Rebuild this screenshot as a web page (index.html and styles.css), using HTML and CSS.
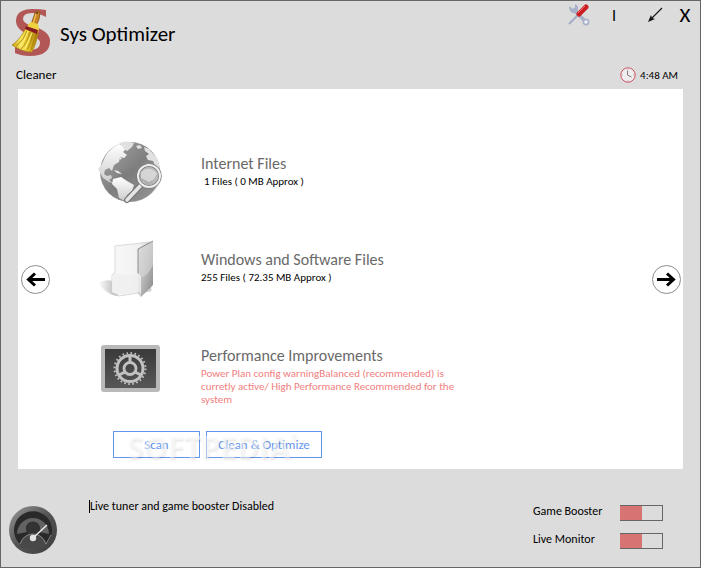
FILE: index.html
```html
<!DOCTYPE html>
<html lang="en">
<head>
<meta charset="utf-8">
<title>Sys Optimizer</title>
<link rel="stylesheet" href="styles.css">
</head>
<body>
<div class="window">
  <header class="titlebar">
    <svg class="logo" viewBox="0 0 38 48" aria-hidden="true">
      <defs>
        <linearGradient id="straw" x1="0" x2="1"><stop offset="0" stop-color="#c99f12"/><stop offset=".35" stop-color="#f8e75a"/><stop offset=".6" stop-color="#e7c92c"/><stop offset="1" stop-color="#a97908"/></linearGradient>
      </defs>
      <path d="M34 2V9Q27 5 20 5Q11 5 11 11Q11 15 20 18Q38 23 38 33Q38 48 18 48Q9 48 3 45V37Q10 42 18 42Q28 42 28 35Q28 30 18 27Q4 22 4 13Q4 1 21 1Q28 1 34 2z" fill="#b35656"/>
      <path d="M23 5q3-4 5 0q0 6-4 13l-5-1q2-7 4-12z" fill="#c78425" stroke="#88520f" stroke-width=".8"/>
      <path d="M24 6l-3 10" stroke="#f0bd55" stroke-width="1.4"/>
      <circle cx="25" cy="5" r="1" fill="#5d3b16"/>
      <path d="M16 17l3-3 7 2 1 5-1 4-12-4z" fill="#eed240"/>
      <path d="M14 20l12 5c-1 7-3 13-6 19-7 0-14-3-20-7 7-5 10-10 14-17z" fill="url(#straw)" stroke="#ac8415" stroke-width=".7"/>
      <path d="M15 23Q11 33 4 38M18 24Q15 35 9 41M21 25Q19 36 15 42M24 26L19 42" fill="none" stroke="#a57e13" stroke-width=".8"/>
      <path d="M16 23Q13 33 7 39M20 25L13 41" fill="none" stroke="#fff890" stroke-width=".9"/>
      <path d="M14 18l12 4-1 4-12-5z" fill="#861b24"/>
    </svg>
    <h1 class="title">Sys Optimizer</h1>
    <nav class="controls" aria-label="Window">
      <button class="control tools" aria-label="Settings">
        <svg viewBox="0 0 22 22">
          <path d="M5 5l12 12" stroke="#a8b1c8" stroke-width="3.6"/>
          <path d="M1 2l4 3 2-1V0q4 2 3 6-1 4-5 3Q1 8 1 2z" fill="#a8b1c8"/>
          <circle cx="18" cy="18" r="2.6" fill="#edf2fa" stroke="#a8b1c8" stroke-width="1.6"/>
          <path d="M1 20L11 10" stroke="#a2abc4" stroke-width="1.8"/>
          <path d="M11 10l7-7" stroke="#ca1e22" stroke-width="5" stroke-linecap="round"/>
          <path d="M10 9l7-7" stroke="#ef6c6a" stroke-width="1"/>
        </svg>
      </button>
      <button class="control bar" aria-label="Information">I</button>
      <button class="control minimize" aria-label="Minimize">
        <svg viewBox="0 0 16 16"><path d="M15 1L5 11" stroke="#111" stroke-width="1.1"/><path d="M1 15l3-7 1 3 3 1z" fill="#111"/></svg>
      </button>
      <button class="control close" aria-label="Close">X</button>
    </nav>
  </header>

  <div class="subbar">
    <h2 class="section">Cleaner</h2>
    <div class="clock">
      <svg viewBox="0 0 16 16" aria-hidden="true"><circle cx="8" cy="8" r="7.2" fill="#eee" stroke="#cc5061"/><path d="M7.5 3.5V8l4 2" fill="none" stroke="#8c7779"/><path d="M8 2v1M8 13v1M2 8h1M13 8h1" stroke="#c9abae"/></svg>
      <time>4:48 AM</time>
    </div>
  </div>

  <main class="panel">
    <button class="arrow" aria-label="Previous">
      <svg viewBox="0 0 29 29"><circle cx="14.5" cy="14.5" r="14" fill="#fff" stroke="#8c8c8c"/><path d="M24 14.500H7M14 8.500L7.500 14.500l6.500 6" fill="none" stroke="#000" stroke-width="3"/></svg>
    </button>
    <div class="content">
      <section class="item">
        <svg class="icon" viewBox="0 0 64 64" aria-hidden="true">
          <defs>
            <linearGradient id="sea" x1="0" y1="0" x2="1" y2="1"><stop offset="0" stop-color="#aaa"/><stop offset=".5" stop-color="#7f7f7f"/><stop offset="1" stop-color="#a4a4a4"/></linearGradient>
            <linearGradient id="land" x1="0" y1="0" x2="0" y2="1"><stop offset="0" stop-color="#fff"/><stop offset="1" stop-color="#ccc"/></linearGradient>
          </defs>
          <circle cx="31" cy="31" r="30" fill="url(#sea)"/>
          <path d="M13 46Q20 20 60 28Q65 48 44 58Q22 64 13 46z" fill="#777" opacity=".3"/>
          <path d="M3 23Q8 8 20 3l5 2 3 2-4 4 4 3-3 3-4-1-1 5-5 3-2 6-3-3-4 2-1 4 3 2 4-1 1 3-3 2 4 3-4-1-6-4-5-9z" fill="url(#land)"/>
          <path d="M20 2q7-3 15 0l-2 4-5 4-3-2-2-3zM37 5l4-1 2 3-4 1zM45 6l5 2 8 9 3 10-4-1-3-6-5-1-2-4 3-2-4-3z" fill="#e1e1e1"/>
          <path d="M48 22l8 1 5 7-1 12-5 3-3-8-6-4-2-6z" fill="#c4c4c4"/>
          <path d="M14 38l8-2 6 4 7 4-2 6-5 4-2 6-6-3-2-9-5-5z" fill="url(#land)"/>
          <path d="M15 29l4 1 4 3-5-1zM20 16l3 1-2 2z" fill="#eee"/>
          <path d="M44 42L28 59" stroke="#777" stroke-width="6" stroke-linecap="round"/>
          <path d="M44 42L28 59" stroke="#e5e5e5" stroke-width="3.600" stroke-linecap="round"/>
          <circle cx="50" cy="35" r="11" fill="#b6b6b6" fill-opacity=".85" stroke="#777" stroke-width="3.400"/>
          <circle cx="50" cy="35" r="11" fill="none" stroke="#eee" stroke-width="2"/>
          <path d="M42 31q8-7 16 1l-3 6-5 3-8-4z" fill="#ddd" opacity=".8"/>
        </svg>
        <div class="text">
          <h3>Internet Files</h3>
          <p class="indent">1 Files ( 0 MB Approx )</p>
        </div>
      </section>
      <section class="item">
        <svg class="icon" viewBox="0 0 64 64" aria-hidden="true">
          <defs>
            <linearGradient id="cover" x1="0" y1="0" x2="1" y2="1"><stop offset="0" stop-color="#ddd"/><stop offset=".5" stop-color="#bbb"/><stop offset="1" stop-color="#858585"/></linearGradient>
            <linearGradient id="sheet"><stop offset="0" stop-color="#f8f8f8"/><stop offset=".7" stop-color="#f1f1f1"/><stop offset="1" stop-color="#ccc"/></linearGradient>
            <linearGradient id="shade"><stop offset="0" stop-color="#fff"/><stop offset="1" stop-color="#b6b6b6"/></linearGradient>
          </defs>
          <path d="M-1 46Q6 42 14 44l4 15Q8 58 -1 46z" fill="url(#shade)"/>
          <path d="M16 9l35-4 1 49-32 5-7-2V38l3-3z" fill="url(#sheet)" stroke="#ccc" stroke-width=".7"/>
          <path d="M39 12l15-8v44L42 60l-3-4z" fill="url(#cover)"/>
          <path d="M39 12l15-8v24q-5 11-13 13l-2-3z" fill="#ddd" opacity=".5"/>
          <path d="M39 37V12l15-8" fill="none" stroke="#777" stroke-width=".8"/>
          <path d="M13 38l3-2q14 5 23 0l3 3v20l-2-4-22 2-5-2z" fill="#eee" opacity=".85"/>
          <path d="M13 56l6 2" stroke="#bbb"/>
        </svg>
        <div class="text">
          <h3>Windows and Software Files</h3>
          <p>255 Files ( 72.35 MB Approx )</p>
        </div>
      </section>
      <section class="item">
        <svg class="icon" viewBox="0 0 64 64" aria-hidden="true">
          <defs><linearGradient id="screen" x1="0" y1="0" x2="0" y2="1"><stop offset="0" stop-color="#3a3a3a"/><stop offset="1" stop-color="#575757"/></linearGradient></defs>
          <rect x="2" y="12" width="59" height="47" rx="3" fill="#b9b9b9"/>
          <rect x="6" y="16" width="51" height="39" fill="url(#screen)"/>
          <g fill="none" stroke="#c2c2c2">
            <circle cx="31" cy="35.500" r="15.500" stroke-width="2" stroke-dasharray="1.600 2.458"/>
            <circle cx="31" cy="35.500" r="13" stroke-width="3"/>
            <circle cx="31" cy="35.500" r="6" stroke-width="2.800"/>
            <path d="M31 23v7M20 42l6-3M42 42l-6-3" stroke-width="3"/>
          </g>
        </svg>
        <div class="text">
          <h3>Performance Improvements</h3>
          <p class="warning">Power Plan config warningBalanced (recommended) is curretly active/ High Performance Recommended for the system</p>
        </div>
      </section>
      <div class="actions">
        <button class="action">Scan</button>
        <button class="action wide">Clean &amp; Optimize</button>
        <span class="watermark">SOFTPEDIA<sup>®</sup></span>
      </div>
    </div>
    <button class="arrow" aria-label="Next">
      <svg viewBox="0 0 29 29"><circle cx="14.5" cy="14.5" r="14" fill="#fff" stroke="#8c8c8c"/><path d="M5 14.500h17M15 8.500l6.500 6-6.500 6" fill="none" stroke="#000" stroke-width="3"/></svg>
    </button>
  </main>

  <footer class="status">
    <svg class="gauge" viewBox="0 0 48 48" aria-hidden="true">
      <defs><linearGradient id="rim" x1="0" y1="0" x2="1" y2="1"><stop offset="0" stop-color="#999"/><stop offset=".5" stop-color="#535353"/><stop offset="1" stop-color="#3d3d3d"/></linearGradient></defs>
      <circle cx="24" cy="24" r="24" fill="url(#rim)"/>
      <path d="M11 38A19 19 0 1 1 37 38Q35 29 24 29T11 38z" fill="#292929"/>
      <path d="M8 28A16 16 0 1 1 40 28L30 26A7 7 0 1 0 18 26z" fill="#626262"/>
      <circle cx="24" cy="23" r="7" fill="#333"/>
      <path d="M11 39Q13 28 24 28T37 39L35 42H13z" fill="#484848"/>
      <path d="M11 38Q15 28 24 28T37 38L42 29" fill="none" stroke="#999" stroke-width=".8"/>
      <path d="M24 32L38 19" stroke="#eee" stroke-width="1.400"/>
      <circle cx="24" cy="32" r="3.200" fill="#e3e3e3"/>
    </svg>
    <div class="message"><input type="text" aria-label="Status" value="Live tuner and game booster Disabled" readonly></div>
    <div class="switches">
      <label for="booster">Game Booster</label><input id="booster" class="switch" type="checkbox">
      <label for="monitor">Live Monitor</label><input id="monitor" class="switch" type="checkbox">
    </div>
  </footer>
</div>
</body>
</html>
```
FILE: styles.css
```css
* { box-sizing: border-box; }

body {
  margin: 0;
  font-family: Carlito, Lato, "Open Sans", sans-serif;
  font-size: 12px;
  line-height: 13px;
  color: #000;
}

h1, h2, h3, p { margin: 0; font-weight: 400; }
button { padding: 0; border: 0; background: none; font: inherit; color: inherit; }
svg { display: block; }

.window {
  display: flex;
  flex-direction: column;
  min-height: 100vh;
  border: 1px solid #666;
  background: #dcdcdc;
}

.titlebar {
  display: flex;
  align-items: flex-start;
  height: 60px;
  padding: 7px 6px 0 11px;
}
.logo { width: 38px; height: 48px; }
.title { margin: 13px 0 0 10px; font-size: 21px; line-height: 26px; }

.controls { display: flex; align-items: center; height: 14px; margin-left: auto; }
.control { display: grid; place-items: center; height: 22px; }
.tools { width: 22px; }
.tools svg { width: 22px; height: 22px; }
.bar { width: 48px; font-size: 16px; }
.minimize { width: 34px; }
.minimize svg { width: 16px; height: 16px; }
.close { width: 18px; margin-left: 4px; font-size: 21px; }

.subbar {
  display: flex;
  align-items: center;
  justify-content: space-between;
  height: 28px;
  padding: 0 22px 0 15px;
}
.section { font-size: 13px; line-height: 16px; }
.clock { display: flex; align-items: center; gap: 4px; font-size: 11px; }
.clock svg { width: 16px; height: 16px; }

.panel {
  flex: 1;
  display: grid;
  grid-template-columns: 29px 1fr 29px;
  align-items: center;
  margin: 0 17px;
  padding: 0 2px 0 3px;
  background: #fff;
}
.arrow svg { width: 29px; height: 29px; }
.content { align-self: start; padding: 52px 0 10px 49px; }

.item { display: flex; align-items: flex-start; height: 96px; }
.icon { flex: none; width: 64px; height: 64px; overflow: visible; }
.text { padding: 13px 0 0 38px; max-width: 310px; }
.text h3 { margin-bottom: 1px; font-size: 16px; line-height: 20px; color: #696969; }
.text p { font-size: 11px; }
.text .indent { padding-left: 3px; }
.text .warning { color: #f08080; }

.actions { position: relative; display: flex; gap: 6px; padding-left: 14px; margin-top: 2px; }
.action {
  width: 87px;
  height: 27px;
  border: 1px solid #6495ed;
  font-size: 13px;
  color: #6495ed;
}
.wide { width: 116px; }
.watermark {
  position: absolute;
  left: 28px;
  top: 1px;
  font-family: "Open Sans", sans-serif;
  font-size: 30px;
  font-weight: 700;
  line-height: 30px;
  color: rgba(255, 255, 255, 0.5);
  text-shadow: 1px 2px 2px rgba(0, 0, 0, 0.08);
  pointer-events: none;
}
.watermark sup { font-size: 10px; line-height: 10px; vertical-align: top; }

.status {
  display: flex;
  align-items: flex-start;
  height: 98px;
  padding: 31px 37px 0 8px;
}
.gauge { flex: none; width: 48px; height: 48px; margin-top: 6px; }
.message { flex: 1; padding-left: 32px; }
.message input {
  width: 100%;
  height: 13px;
  padding: 0;
  border: 0;
  border-left: 1px solid #000;
  background: none;
  font: inherit;
  outline: 0;
}
.switches {
  display: grid;
  grid-template-columns: 87px 43px;
  row-gap: 12px;
  padding-top: 5px;
}
.switch {
  appearance: none;
  width: 43px;
  height: 16px;
  margin: 0;
  border: 1px solid #666;
  border-left: 0;
  background: linear-gradient(90deg, #d67373 22px, transparent 22px);
}
```
